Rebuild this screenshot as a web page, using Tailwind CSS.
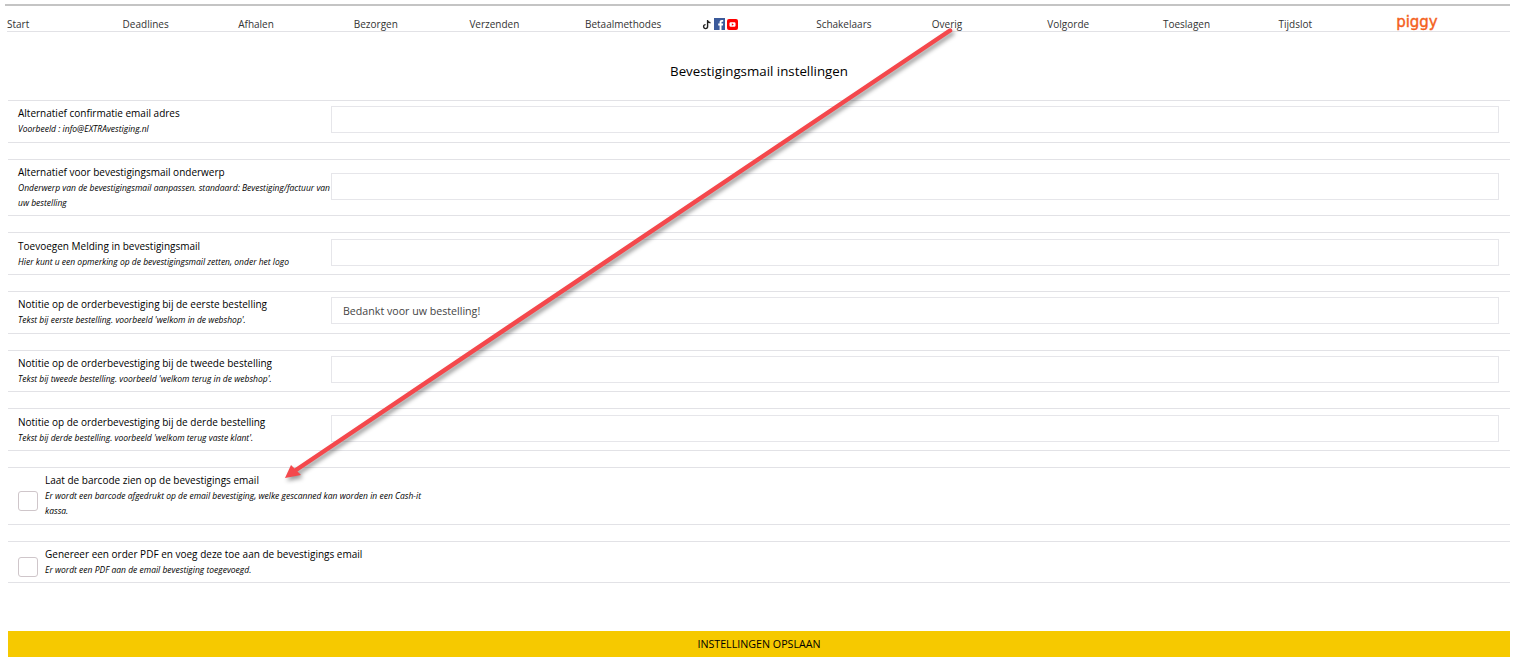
<!DOCTYPE html>
<html lang="nl">
<head>
<meta charset="utf-8">
<script src="https://cdn.jsdelivr.net/npm/@tailwindcss/browser@4"></script>
<title>Bevestigingsmail instellingen</title>
</head>
<body class="relative h-[663px] w-[1522px] overflow-hidden bg-white font-['Open_Sans',sans-serif] text-black">
<div class="ml-[5px] mt-[4px] h-[2px] w-[1505px] bg-[#c4c4c4]"></div>
<nav class="ml-[7px] flex h-[26px] w-[1503px] items-end border-b border-[#e2e2e6] text-[10px] leading-[14px] text-[#333]">
  <div class="flex h-full w-full items-center pt-[10px]">
    <a class="w-[115.6px]">Start</a>
    <a class="w-[115.6px]">Deadlines</a>
    <a class="w-[115.6px]">Afhalen</a>
    <a class="w-[115.6px]">Bezorgen</a>
    <a class="w-[115.6px]">Verzenden</a>
    <a class="w-[115.6px]">Betaalmethodes</a>
    <div class="mt-[1px] flex w-[115.6px] items-center gap-[2px] pl-[1px]">
      <svg class="h-[11px] w-[10px]" viewBox="0 0 10 11"><path d="M5.600 1v6.600a2 2 0 1 1-2-2M5.600 1c.2 1.600 1.300 2.600 2.900 2.700" fill="none" stroke="#222" stroke-width="1.400"/></svg>
      <svg class="h-[12px] w-[11px]" viewBox="0 0 11 12"><rect width="11" height="12" fill="#3b5a9a"/><path d="M7.500 12V7.400h1.400l.3-1.800H7.500V4.600c0-.6.2-.9.9-.9h.8V2.100C8.900 2 8.400 2 7.900 2 6.500 2 5.600 2.800 5.600 4.300v1.300H4.200v1.800h1.400V12z" fill="#fff"/></svg>
      <svg class="h-[11px] w-[11px]" viewBox="0 0 11 11"><rect width="11" height="11" rx="2" fill="#f00"/><rect x="2.500" y="3.200" width="6" height="4.600" rx="1.200" fill="#fff"/><path d="M4.800 4.200v2.600l2-1.300z" fill="#f00"/></svg>
    </div>
    <a class="w-[115.6px]">Schakelaars</a>
    <a class="w-[115.6px]">Overig</a>
    <a class="w-[115.6px]">Volgorde</a>
    <a class="w-[115.6px]">Toeslagen</a>
    <a class="w-[115.6px]">Tijdslot</a>
    <a class="mb-[3px] w-[115.6px] pl-[2px] font-['DejaVu_Sans',sans-serif] text-[15px] leading-[14px] text-[#f4601c] [-webkit-text-stroke:0.4px_#f4601c]">piggy</a>
  </div>
</nav>
<h1 class="mt-[30px] pr-[4px] text-center text-[13.3px] font-normal leading-[18px] text-black">Bevestigingsmail instellingen</h1>
<main class="ml-[8px] mt-[20px] w-[1502px]">
  <section class="mb-[16px] flex h-[43px] items-center border-y border-[#e2e2e6]">
    <div class="w-[323px] pb-[2px] pl-[10px]">
      <p class="text-[10px] font-medium leading-[16px]">Alternatief confirmatie email adres</p>
      <p class="text-[8.5px] font-medium italic leading-[15px]">Voorbeeld : info@EXTRAvestiging.nl</p>
    </div>
    <input class="mb-[4px] h-[27px] w-[1168px] border border-[#e6e6ea] bg-white px-[11px] text-[10.65px] text-[#444]" type="text">
  </section>
  <section class="mb-[16px] flex h-[57px] items-center border-y border-[#e2e2e6]">
    <div class="w-[323px] pb-[2px] pl-[10px]">
      <p class="text-[10px] font-medium leading-[16px]">Alternatief voor bevestigingsmail onderwerp</p>
      <p class="text-[8.5px] font-medium italic leading-[15px]">Onderwerp van de bevestigingsmail aanpassen. standaard: Bevestiging/factuur van uw bestelling</p>
    </div>
    <input class="mb-[2px] h-[27px] w-[1168px] border border-[#e6e6ea] bg-white px-[11px] text-[10.65px] text-[#444]" type="text">
  </section>
  <section class="mb-[16px] flex h-[43px] items-center border-y border-[#e2e2e6]">
    <div class="w-[323px] pl-[10px]">
      <p class="text-[10px] font-medium leading-[16px]">Toevoegen Melding in bevestigingsmail</p>
      <p class="text-[8.5px] font-medium italic leading-[15px]">Hier kunt u een opmerking op de bevestigingsmail zetten, onder het logo</p>
    </div>
    <input class="mb-[2px] h-[27px] w-[1168px] border border-[#e6e6ea] bg-white px-[11px] text-[10.65px] text-[#444]" type="text">
  </section>
  <section class="mb-[16px] flex h-[43px] items-center border-y border-[#e2e2e6]">
    <div class="w-[323px] pb-[2px] pl-[10px]">
      <p class="text-[10px] font-medium leading-[16px]">Notitie op de orderbevestiging bij de eerste bestelling</p>
      <p class="text-[8.5px] font-medium italic leading-[15px]">Tekst bij eerste bestelling. voorbeeld 'welkom in de webshop'.</p>
    </div>
    <input class="mb-[4px] h-[27px] w-[1168px] border border-[#e6e6ea] bg-white px-[11px] text-[10.65px] text-[#444]" type="text" value="Bedankt voor uw bestelling!">
  </section>
  <section class="mb-[16px] flex h-[42px] items-center border-y border-[#e2e2e6]">
    <div class="w-[323px] pb-[2px] pl-[10px]">
      <p class="text-[10px] font-medium leading-[16px]">Notitie op de orderbevestiging bij de tweede bestelling</p>
      <p class="text-[8.5px] font-medium italic leading-[15px]">Tekst bij tweede bestelling. voorbeeld 'welkom terug in de webshop'.</p>
    </div>
    <input class="mb-[3px] h-[27px] w-[1168px] border border-[#e6e6ea] bg-white px-[11px] text-[10.65px] text-[#444]" type="text">
  </section>
  <section class="mb-[16px] flex h-[43px] items-center border-y border-[#e2e2e6]">
    <div class="w-[323px] pl-[10px]">
      <p class="text-[10px] font-medium leading-[16px]">Notitie op de orderbevestiging bij de derde bestelling</p>
      <p class="text-[8.5px] font-medium italic leading-[15px]">Tekst bij derde bestelling. voorbeeld 'welkom terug vaste klant'.</p>
    </div>
    <input class="mb-[2px] h-[27px] w-[1168px] border border-[#e6e6ea] bg-white px-[11px] text-[10.65px] text-[#444]" type="text">
  </section>
  <section class="mb-[16px] flex h-[58px] items-center border-y border-[#e2e2e6] pl-[10px]">
    <input class="mt-[10px] h-[20px] w-[20px] shrink-0 appearance-none rounded-[3px] border border-[#cfc6ca] bg-white" type="checkbox">
    <div class="ml-[7px] w-[380px] pb-[2px]">
      <p class="text-[10px] font-medium leading-[16px]">Laat de barcode zien op de bevestigings email</p>
      <p class="text-[8.5px] font-medium italic leading-[15px]">Er wordt een barcode afgedrukt op de email bevestiging, welke gescanned kan worden in een Cash-it kassa.</p>
    </div>
  </section>
  <section class="flex h-[42px] items-center border-y border-[#e2e2e6] pl-[10px]">
    <input class="mt-[9px] h-[20px] w-[20px] shrink-0 appearance-none rounded-[3px] border border-[#cfc6ca] bg-white" type="checkbox">
    <div class="ml-[7px] w-[380px] pb-[2px]">
      <p class="text-[10px] font-medium leading-[16px]">Genereer een order PDF en voeg deze toe aan de bevestigings email</p>
      <p class="text-[8.5px] font-medium italic leading-[15px]">Er wordt een PDF aan de email bevestiging toegevoegd.</p>
    </div>
  </section>
  <button class="mt-[48px] block h-[26px] w-full bg-[#f6c900] text-center text-[10.7px] leading-[26px] text-black">INSTELLINGEN OPSLAAN</button>
</main>
<svg class="pointer-events-none absolute left-0 top-0 h-[663px] w-[1522px] drop-shadow-[2px_3px_2px_rgba(0,0,0,0.4)]" viewBox="0 0 1522 663">
  <path d="M950 30.500 L296 470" stroke="#f4484c" stroke-width="4.500" stroke-linecap="round" fill="none"/>
  <path d="M285 478 L291 465 L301 475 Z" fill="#f4484c"/>
</svg>
</body>
</html>
